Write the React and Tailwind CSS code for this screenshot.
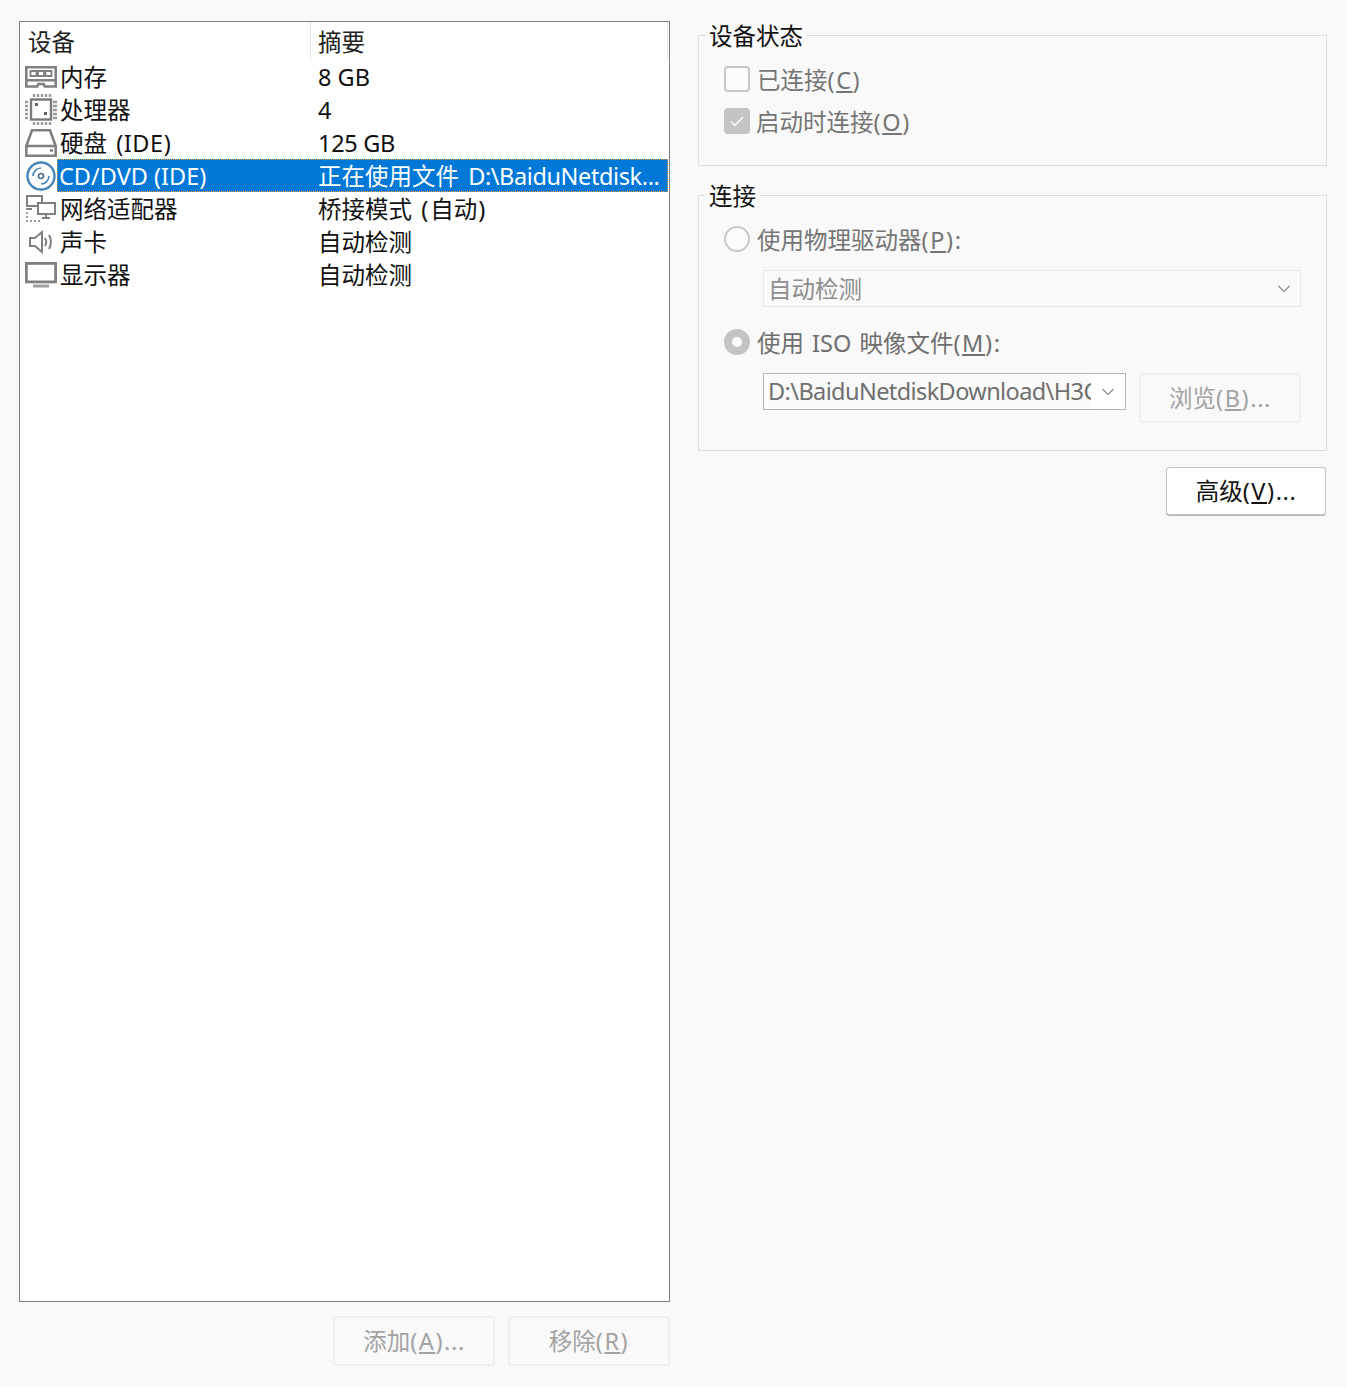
const font = { fontFamily: '"Noto Sans", "Noto Sans CJK SC", sans-serif' };

const MemoryIcon = () => (
  <svg width="32" height="22" viewBox="0 0 32 22" fill="none">
    <path d="M1.300 1.300h29.400v13H1.300z M1.300 14v6.500h11l1-2.500h5.500l1 2.500h10.900V14" stroke="#808080" strokeWidth="2.600" />
    <path d="M5.500 5h6v5h-6z M13 5h6v5h-6z M20.500 5h6v5h-6z" stroke="#808080" strokeWidth="1.800" />
  </svg>
);

const CpuIcon = () => (
  <svg width="32" height="32" viewBox="0 0 32 32" fill="none">
    <rect x="6" y="5.500" width="20" height="20" stroke="#7a7a7a" strokeWidth="2.400" />
    <path d="M9 0v3M13 0v3M17 0v3M21 0v3M25 0v3M9 28v3M13 28v3M17 28v3M21 28v3M25 28v3M0 8h3M0 12h3M0 16h3M0 20h3M0 24h3M28 8h4M28 12h4M28 16h4M28 20h4M28 24h4" stroke="#9a9a9a" strokeWidth="2.400" />
    <rect x="10" y="9" width="3" height="3" fill="#606060" />
    <rect x="19" y="18" width="3" height="3" fill="#606060" />
  </svg>
);

const DiskIcon = () => (
  <svg width="32" height="28" viewBox="0 0 32 28" fill="none">
    <path d="M7 1.300h18l5.700 15.700v9.700H1.300V17z M1.300 17h29.400" stroke="#808080" strokeWidth="2.600" />
    <rect x="25" y="20.500" width="3" height="2" fill="#606060" />
  </svg>
);

const DiscIcon = () => (
  <svg width="30" height="30" viewBox="0 0 30 30" fill="none">
    <circle cx="15" cy="15" r="13.500" stroke="#4a86b8" strokeWidth="2.400" />
    <circle cx="15" cy="15" r="2.500" stroke="#4a6f8f" strokeWidth="1.600" />
    <path d="M7 15a8 8 0 0 1 8-8" stroke="#4a86b8" strokeWidth="1.600" />
    <path d="M23 15a8 8 0 0 1-8 8" stroke="#4a86b8" strokeWidth="1.600" />
  </svg>
);

const NetworkIcon = () => (
  <svg width="30" height="28" viewBox="0 0 30 28" fill="none">
    <path d="M1 1h15v10H1z" stroke="#808080" strokeWidth="2" />
    <rect x="12" y="8" width="17" height="11" fill="#fff" stroke="#808080" strokeWidth="2" />
    <path d="M20 19v4M16 23h8" stroke="#808080" strokeWidth="2" />
    <path d="M1 13v13h15" stroke="#9a9a9a" strokeWidth="2" strokeDasharray="2 2" />
    <path d="M1 14h5" stroke="#808080" strokeWidth="2" />
  </svg>
);

const SoundIcon = () => (
  <svg width="24" height="24" viewBox="0 0 24 24" fill="none">
    <path d="M1 8h5l7-6v20l-7-6H1z" stroke="#808080" strokeWidth="2" />
    <path d="M16 8c1.500 2.500 1.500 5.500 0 8M20 5c2.500 4.500 2.500 9.500 0 14" stroke="#808080" strokeWidth="2" />
  </svg>
);

const MonitorIcon = () => (
  <svg width="32" height="26" viewBox="0 0 32 26" fill="none">
    <rect x="1.400" y="1.400" width="29.200" height="18.500" stroke="#808080" strokeWidth="2.800" />
    <rect x="8" y="22.500" width="16" height="3" fill="#a0a0a0" />
  </svg>
);

const Chevron = () => (
  <svg width="14" height="8" viewBox="0 0 14 8" fill="none">
    <path d="M1.500 1l5.500 5.500L12.500 1" stroke="#8a8a8a" strokeWidth="1.200" />
  </svg>
);

// mnemonic like (C) or (A)... is set a little wider than the rest of the text
const Key = ({ k, tail = '' }) => (
  <>
    <span className="tracking-[1.600px]">(<u>{k}</u>)</span>
    <span className="tracking-[0.600px]">{tail}</span>
  </>
);

const devices = [
  { icon: <MemoryIcon />, name: '内存', summary: '8 GB' },
  { icon: <CpuIcon />, name: '处理器', summary: '4' },
  { icon: <DiskIcon />, name: <span className="[word-spacing:3px]">硬盘 <span className="tracking-[0.600px]">(IDE)</span></span>, summary: <span className="tracking-[-0.300px]">125 GB</span> },
  { icon: <DiscIcon />, name: 'CD/DVD (IDE)', summary: <span className="[word-spacing:3px]">正在使用文件 <span className="tracking-[-0.400px]">D:\BaiduNetdisk...</span></span>, selected: true },
  { icon: <NetworkIcon />, name: '网络适配器', summary: <span className="[word-spacing:3px]">桥接模式 <span className="tracking-[2px]">(</span>自动<span className="pl-[1px]">)</span></span> },
  { icon: <SoundIcon />, name: '声卡', summary: '自动检测' },
  { icon: <MonitorIcon />, name: '显示器', summary: '自动检测' },
];

const DeviceRow = ({ icon, name, summary, selected }) => (
  <div className="flex h-[33px] items-center">
    <div className="flex w-[37px] shrink-0 justify-center pl-[4px]">{icon}</div>
    {selected ? (
      <div className="flex h-[33px] w-[611px] items-center border border-dotted border-[#f0a040] bg-[#0078d7] pt-[2px] text-white">
        <span className="w-[260px] shrink-0 pl-[1px] whitespace-nowrap">{name}</span>
        <span className="whitespace-nowrap">{summary}</span>
      </div>
    ) : (
      <div className="flex h-[33px] w-[611px] items-center pt-[2px] text-[#111]">
        <span className="w-[261px] shrink-0 pl-[3px] whitespace-nowrap">{name}</span>
        <span className="whitespace-nowrap">{summary}</span>
      </div>
    )}
  </div>
);

const DisabledButton = ({ children, className }) => (
  <div className={`flex h-[50px] w-[162px] items-center justify-center rounded-[3px] border-[2px] border-[#f0f0f0] bg-[#f9f9f9] pt-[2px] text-[#a3a3a3] outline outline-1 -outline-offset-2 outline-[#eeeeee] ${className}`}>
    {children}
  </div>
);

const GroupBox = ({ title, className, children }) => (
  <fieldset className={`border border-[#dcdcdc] ${className}`}>
    <legend className="ml-[6px] h-[30px] px-[4px] leading-[33px] text-[#111]">{title}</legend>
    <div className="pl-[25px]">{children}</div>
  </fieldset>
);

const App = () => {
  return (
    <div className="flex h-[1387px] w-[1346px] items-start gap-[28px] bg-[#f9f9f9] pl-[19px] pt-[21px] text-[23.500px]" style={font}>
      {/* left side: device list */}
      <div className="w-[651px] shrink-0">
        <div className="h-[1281px] w-full border border-[#7d7d87] bg-white">
          <div className="flex h-[38px] w-[648px] items-center border-r border-[#e5e5e5] leading-[40px] text-[#222]">
            <span className="h-full w-[291px] border-r border-[#e5e5e5] pl-[8px]">设备</span>
            <span className="h-full pl-[7px]">摘要</span>
          </div>
          {devices.map((device, i) => (
            <DeviceRow key={i} {...device} />
          ))}
        </div>
        <div className="mt-[14px] flex justify-end gap-[13px]">
          <DisabledButton><span>添加<Key k="A" tail="..." /></span></DisabledButton>
          <DisabledButton><span>移除<Key k="R" /></span></DisabledButton>
        </div>
      </div>

      {/* right side: device status and connection */}
      <div className="-mt-[1px] w-[629px] shrink-0">
        <GroupBox title="设备状态" className="h-[146px]">
          <div className="mt-[10px] flex h-[42px] items-center gap-[7px] text-[#757575]">
            <div className="mb-[4px] h-[26px] w-[26px] rounded-[4px] border-2 border-[#c8c8c8] bg-[#fbfbfb]" />
            <span>已连接<Key k="C" /></span>
          </div>
          <div className="flex h-[42px] items-center gap-[6px] text-[#757575]">
            <div className="mb-[4px] flex h-[26px] w-[26px] items-center justify-center rounded-[4px] bg-[#c4c4c4]">
              <svg width="14" height="11" viewBox="0 0 14 11" fill="none">
                <path d="M1 5.500l4 4L13 1" stroke="#fff" strokeWidth="1.300" />
              </svg>
            </div>
            <span>启动时连接<Key k="O" /></span>
          </div>
        </GroupBox>

        <GroupBox title="连接" className="mt-[14px] h-[271px]">
          <div className="mt-[10px] flex h-[42px] items-center gap-[7px] text-[#757575]">
            <div className="mb-[4px] h-[26px] w-[26px] rounded-full border-2 border-[#c8c8c8] bg-[#fbfbfb]" />
            <span>使用物理驱动器<Key k="P" />:</span>
          </div>
          <div className="ml-[39px] mt-[8px] flex h-[37px] w-[538px] items-center justify-between border border-[#e8e8e8] bg-[#fafafa] pl-[4px] pr-[9px] text-[#8e8e8e]">
            <span className="pt-[2px]">自动检测</span>
            <Chevron />
          </div>
          <div className="mt-[16px] flex h-[42px] items-center gap-[7px] text-[#6f6f6f]">
            <div className="mb-[4px] flex h-[26px] w-[26px] items-center justify-center rounded-full bg-[#c4c4c4]">
              <div className="h-[10px] w-[10px] rounded-full bg-[#fbfbfb]" />
            </div>
            <span className="[word-spacing:2px]">使用 ISO 映像文件<Key k="M" />:</span>
          </div>
          <div className="ml-[39px] mt-[8px] flex items-start gap-[13px]">
            <div className="flex h-[37px] w-[363px] items-center border border-[#b4b4b4] bg-white pl-[1px] pr-[9px] text-[#6f6f6f]">
              <span className="w-[326px] shrink-0 overflow-hidden whitespace-nowrap bg-[#fafafa] pl-[3px] tracking-[-0.600px]">D:\BaiduNetdiskDownload\H3C</span>
              <div className="ml-[10px]"><Chevron /></div>
            </div>
            <DisabledButton>
              <span>浏览<Key k="B" tail="..." /></span>
            </DisabledButton>
          </div>
        </GroupBox>

        <div className="mt-[16px] flex justify-end pr-[1px]">
          <div className="flex h-[48px] w-[160px] items-center justify-center rounded-[3px] border border-[#c4c4c4] bg-white pt-[2px] text-[#111] shadow-[0_1px_0_#b8b8b8]">
            <span>高级<Key k="V" tail="..." /></span>
          </div>
        </div>
      </div>
    </div>
  );
};

export default App;
